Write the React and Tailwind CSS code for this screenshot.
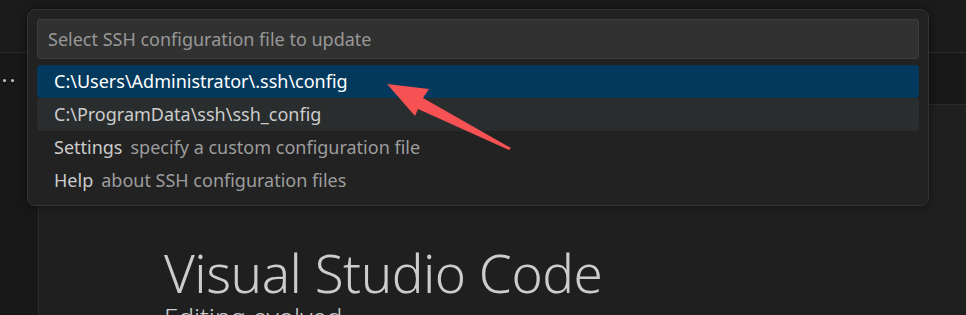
export default function App() {
  const font = { fontFamily: '"Noto Sans", "Open Sans", sans-serif' };
  return (
    <div className="relative w-[966px] h-[315px] overflow-hidden bg-[#181818]" style={font}>
      {/* title bar */}
      <div className="h-[53px] shrink-0 border-b border-[#2b2b2b] bg-[#1b1b1b]" />
      <div className="flex h-[262px]">
        {/* left strip */}
        <div className="w-[39px] shrink-0 border-r border-[#2b2b2b] bg-[#181818] relative">
          <div className="flex gap-[5px] pt-[26px] pl-[3px]">
            <span className="w-[3px] h-[3px] rounded-full bg-[#c5c5c5]" />
            <span className="w-[3px] h-[3px] rounded-full bg-[#c5c5c5]" />
          </div>
        </div>
        <div className="flex-1 flex flex-col min-h-0">
          <div className="h-[52px] shrink-0 border-b border-[#2b2b2b] bg-[#181818]" />
          <div className="flex-1 min-h-0 bg-[#1f1f1f] pl-[125px] pt-[141px] overflow-hidden">
            <div className="text-[53px] leading-none font-light text-[#cccccc] tracking-[-0.5px] whitespace-nowrap">Visual Studio Code</div>
            <div className="text-[26px] leading-none font-light text-[#cccccc] mt-[5px] whitespace-nowrap">Editing evolved</div>
          </div>
        </div>
      </div>

      {/* quick pick dialog */}
      <div className="absolute left-[27px] top-[9px] w-[902px] h-[197px] rounded-[8px] border border-[#333333] bg-[#222222] shadow-[0_0_10px_rgba(0,0,0,0.5)] px-[9px] pt-[9px]">
        <div className="h-[40px] rounded-[3px] border border-[#3c3c3c] bg-[#313131] flex items-center pl-[10px] text-[18px] text-[#989898]">
          Select SSH configuration file to update
        </div>
        <div className="mt-[6px] flex flex-col">
          <div className="h-[33px] rounded-[4px] bg-[#04395e] flex items-center pl-[17px] text-[18px] text-white">
            C:\Users\Administrator\.ssh\config
          </div>
          <div className="h-[33px] rounded-[4px] bg-[#2a2d2e] flex items-center pl-[17px] text-[18px] text-[#cccccc]">
            C:\ProgramData\ssh\ssh_config
          </div>
          <div className="h-[33px] flex items-center pl-[17px] text-[18px] text-[#cccccc] gap-[8px]">
            <span>Settings</span>
            <span className="text-[#9d9d9d]">specify a custom configuration file</span>
          </div>
          <div className="h-[33px] flex items-center pl-[17px] text-[18px] text-[#cccccc] gap-[8px]">
            <span>Help</span>
            <span className="text-[#9d9d9d]">about SSH configuration files</span>
          </div>
        </div>
      </div>

      {/* red arrow annotation */}
      <svg className="absolute left-0 top-0" width="966" height="315" viewBox="0 0 966 315">
        <polygon
          points="387,84 429,89 423,98 511,148 509,150 418,109 415,116"
          fill="#f65253"
        />
      </svg>
    </div>
  );
}
